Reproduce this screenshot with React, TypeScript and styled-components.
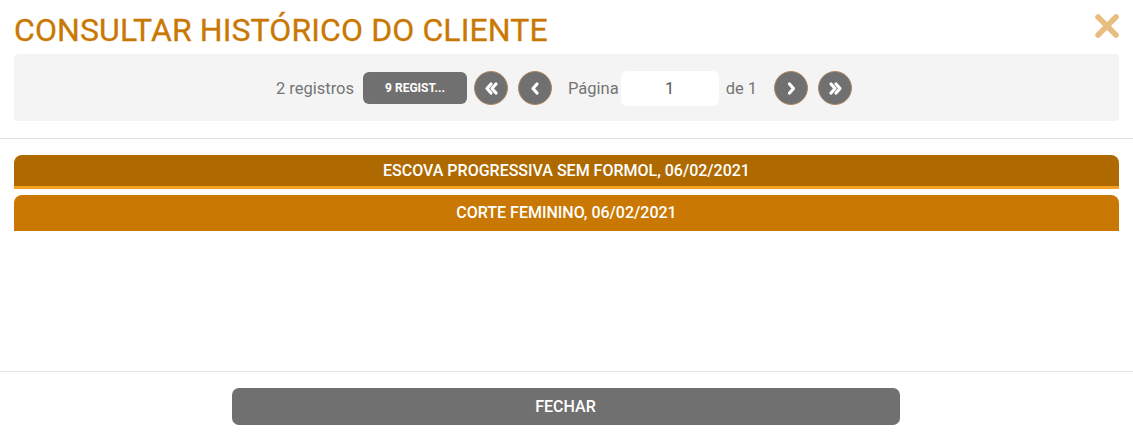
import styled, { createGlobalStyle } from "styled-components";

const GlobalStyle = createGlobalStyle`
  html, body {
    margin: 0;
    padding: 0;
    background: #ffffff;
  }
  body {
    font-family: "Roboto", "Liberation Sans", sans-serif;
  }
`;

const history = [
    {label: "ESCOVA PROGRESSIVA SEM FORMOL, 06/02/2021", active: true},
    {label: "CORTE FEMININO, 06/02/2021", active: false},
];

export default function App() {
    return (
        <>
            <GlobalStyle/>
            <Modal>
                <Header>
                    <Title>CONSULTAR HISTÓRICO DO CLIENTE</Title>
                    <CloseButton aria-label="Fechar">
                        <svg width="26" height="26" viewBox="0 0 26 26">
                            <path d="M4 4 L22 22 M22 4 L4 22" stroke="#e8bd80" strokeWidth="5.5" strokeLinecap="round"/>
                        </svg>
                    </CloseButton>
                </Header>
                <Toolbar>
                    <Label>2 registros</Label>
                    <PageSize>9 REGIST...</PageSize>
                    <RoundButton>
                        <Chevron double left/>
                    </RoundButton>
                    <RoundButton $ml={10}>
                        <Chevron left/>
                    </RoundButton>
                    <Label $ml={16}>Página</Label>
                    <PageInput defaultValue="1"/>
                    <Label>de 1</Label>
                    <RoundButton $ml={17}>
                        <Chevron/>
                    </RoundButton>
                    <RoundButton $ml={10}>
                        <Chevron double/>
                    </RoundButton>
                </Toolbar>
                <Body>
                    {history.map((item) => (
                        <AccordionItem key={item.label} $active={item.active}>
                            {item.label}
                        </AccordionItem>
                    ))}
                </Body>
                <Footer>
                    <CloseBar>FECHAR</CloseBar>
                </Footer>
            </Modal>
        </>
    )
}

function Chevron({left, double}: { left?: boolean, double?: boolean }) {
    const one = left ? "M10 4 L6 8.5 L10 13" : "M6.5 4 L10.5 8.5 L6.5 13";
    const two = left
        ? ["M8 4 L4 8.5 L8 13", "M13 4 L9 8.5 L13 13"]
        : ["M4 4 L8 8.5 L4 13", "M9 4 L13 8.5 L9 13"];
    return (
        <svg width="17" height="17" viewBox="0 0 17 17" fill="none">
            {(double ? two : [one]).map((d) => (
                <path key={d} d={d} stroke="#ffffff" strokeWidth="3.2" strokeLinecap="round" strokeLinejoin="round"/>
            ))}
        </svg>
    );
}

const Modal = styled.div`
  display: flex;
  flex-direction: column;
  height: 100vh;
  box-sizing: border-box;
`;

const Header = styled.div`
  display: flex;
  justify-content: space-between;
  align-items: flex-start;
  height: 54px;
  padding: 0 13px 0 14px;
  box-sizing: border-box;
`;

const Title = styled.h1`
  margin: 10px 0 0;
  font-size: 32px;
  font-weight: 400;
  line-height: 40px;
  color: #c97804;
  letter-spacing: 0.1px;
  -webkit-text-stroke: 0.3px #c97804;
`;

const CloseButton = styled.button`
  border: 0;
  background: none;
  padding: 0;
  margin-top: 13px;
  width: 26px;
  height: 26px;
  cursor: pointer;
`;

const Toolbar = styled.div`
  margin: 0 14px;
  height: 67px;
  background: #f4f4f4;
  border-radius: 4px;
  display: flex;
  justify-content: center;
  align-items: center;
  padding-right: 5px;
  padding-top: 1px;
  box-sizing: border-box;
`;

const Label = styled.span<{ $ml?: number }>`
  font-size: 16.5px;
  color: #757575;
  margin-left: ${(p) => p.$ml ?? 0}px;
`;

const PageSize = styled.button`
  width: 104px;
  height: 32px;
  border: 0;
  border-radius: 6px;
  background: #707070;
  color: #ffffff;
  font-family: inherit;
  font-size: 12px;
  font-weight: 700;
  margin: 0 7px 0 9px;
`;

const RoundButton = styled.button<{ $ml?: number }>`
  width: 34px;
  height: 34px;
  border-radius: 50%;
  border: 1px solid #b28a62;
  background: #707070;
  display: flex;
  align-items: center;
  justify-content: center;
  padding: 0;
  margin-left: ${(p) => p.$ml ?? 0}px;
`;

const PageInput = styled.input`
  width: 98px;
  height: 35px;
  border: 0;
  border-radius: 6px;
  background: #ffffff;
  text-align: center;
  font-family: inherit;
  font-size: 16.5px;
  color: #555555;
  margin: 0 7px 0 2px;
  box-sizing: border-box;
  outline: none;
`;

const Body = styled.div`
  flex: 1;
  border-top: 1px solid #e0e0e0;
  margin-top: 17px;
  padding: 16px 14px 0;
  display: flex;
  flex-direction: column;
  gap: 6px;
`;

const AccordionItem = styled.div<{ $active?: boolean }>`
  height: ${(p) => (p.$active ? "34px" : "36px")};
  box-sizing: border-box;
  background: ${(p) => (p.$active ? "#ae6a00" : "#c97804")};
  border-bottom: ${(p) => (p.$active ? "3px solid #f7a125" : "none")};
  border-radius: 8px 8px 0 0;
  color: #ffffff;
  font-size: 16px;
  font-weight: 500;
  display: flex;
  align-items: center;
  justify-content: center;
  padding-bottom: 1px;
`;

const Footer = styled.div`
  border-top: 1px solid #e2e2e2;
  height: 65px;
  display: flex;
  justify-content: center;
  padding-top: 16px;
  box-sizing: border-box;
`;

const CloseBar = styled.button`
  width: 668px;
  height: 37px;
  border: 0;
  border-radius: 7px;
  background: #707070;
  color: #ffffff;
  font-family: inherit;
  font-size: 16px;
  font-weight: 500;
  margin-right: 2px;
`;
